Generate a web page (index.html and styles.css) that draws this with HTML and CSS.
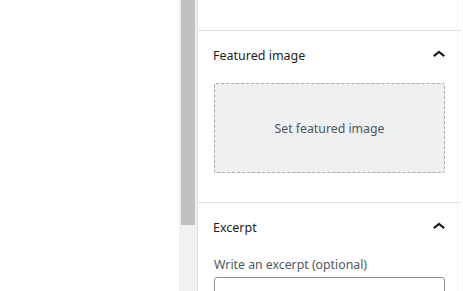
FILE: index.html
```html
<!DOCTYPE html>
<html>
<head>
<meta charset="utf-8">
<link rel="stylesheet" href="styles.css">
</head>
<body>
<div class="app">
  <div class="canvas"></div>
  <div class="scroll-track"><div class="scroll-thumb"></div></div>
  <aside class="sidebar">
    <div class="panel-top"></div>
    <section class="panel">
      <div class="panel-header">
        <span class="panel-title">Featured image</span>
        <svg class="chev" viewBox="0 0 24 24" width="24" height="24"><path d="M6.8 13.2L12 9l5.2 4.2"/></svg>
      </div>
      <div class="panel-body featured">
        <div class="featured-box">Set featured image</div>
      </div>
    </section>
    <section class="panel last">
      <div class="panel-header">
        <span class="panel-title">Excerpt</span>
        <svg class="chev" viewBox="0 0 24 24" width="24" height="24"><path d="M6.8 13.2L12 9l5.2 4.2"/></svg>
      </div>
      <div class="panel-body">
        <label class="excerpt-label">Write an excerpt (optional)</label>
        <div class="excerpt-input"></div>
      </div>
    </section>
    <div class="edge-line"></div>
  </aside>
</div>
</body>
</html>
```

FILE: styles.css
```css
html, body {
  margin: 0;
  padding: 0;
  background: #fff;
  overflow: hidden;
}
body {
  font-family: "Noto Sans", "Open Sans", sans-serif;
  font-size: 12.3px;
  color: #1e1e1e;
}
.app {
  display: flex;
  width: 463px;
  height: 291px;
  overflow: hidden;
}
.canvas {
  width: 179px;
  flex: none;
}
.scroll-track {
  width: 18px;
  flex: none;
  background: #f1f1f1;
  padding: 0 2px;
  box-sizing: border-box;
}
.scroll-thumb {
  height: 225px;
  background: #c1c1c1;
}
.sidebar {
  position: relative;
  flex: 1;
  border-left: 1px solid #e0e0e0;
  box-sizing: border-box;
  display: flex;
  flex-direction: column;
  padding-right: 2px;
}
.panel-top {
  height: 30px;
  border-bottom: 1px solid #e0e0e0;
  flex: none;
}
.panel {
  border-bottom: 1px solid #e0e0e0;
  flex: none;
}
.panel.last {
  border-bottom: none;
}
.panel-header {
  height: 48px;
  display: flex;
  align-items: center;
  justify-content: space-between;
  padding: 0 10px 0 15px;
}
.panel-title {
  font-size: 12.5px;
  font-weight: 400;
  color: #1e1e1e;
}
.chev {
  fill: none;
  stroke: #1e1e1e;
  stroke-width: 2.2;
  display: block;
}
.panel-body {
  padding: 0 16px;
}
.panel-body.featured {
  padding-top: 4px;
  padding-bottom: 29px;
}
.featured-box {
  height: 90px;
  box-sizing: border-box;
  background: #edeff0;
  border: 1px dashed #a7aaad;
  border-radius: 2px;
  display: flex;
  align-items: center;
  justify-content: center;
  color: #50575e;
}
.excerpt-label {
  display: block;
  line-height: 16px;
  margin-top: 6px;
  color: #50575e;
}
.excerpt-input {
  margin-top: 4px;
  height: 40px;
  border: 1px solid #8c8f94;
  border-radius: 3px;
}
.edge-line {
  position: absolute;
  top: 0;
  bottom: 0;
  right: 5px;
  width: 1px;
  background: #f0f0f0;
}
```
